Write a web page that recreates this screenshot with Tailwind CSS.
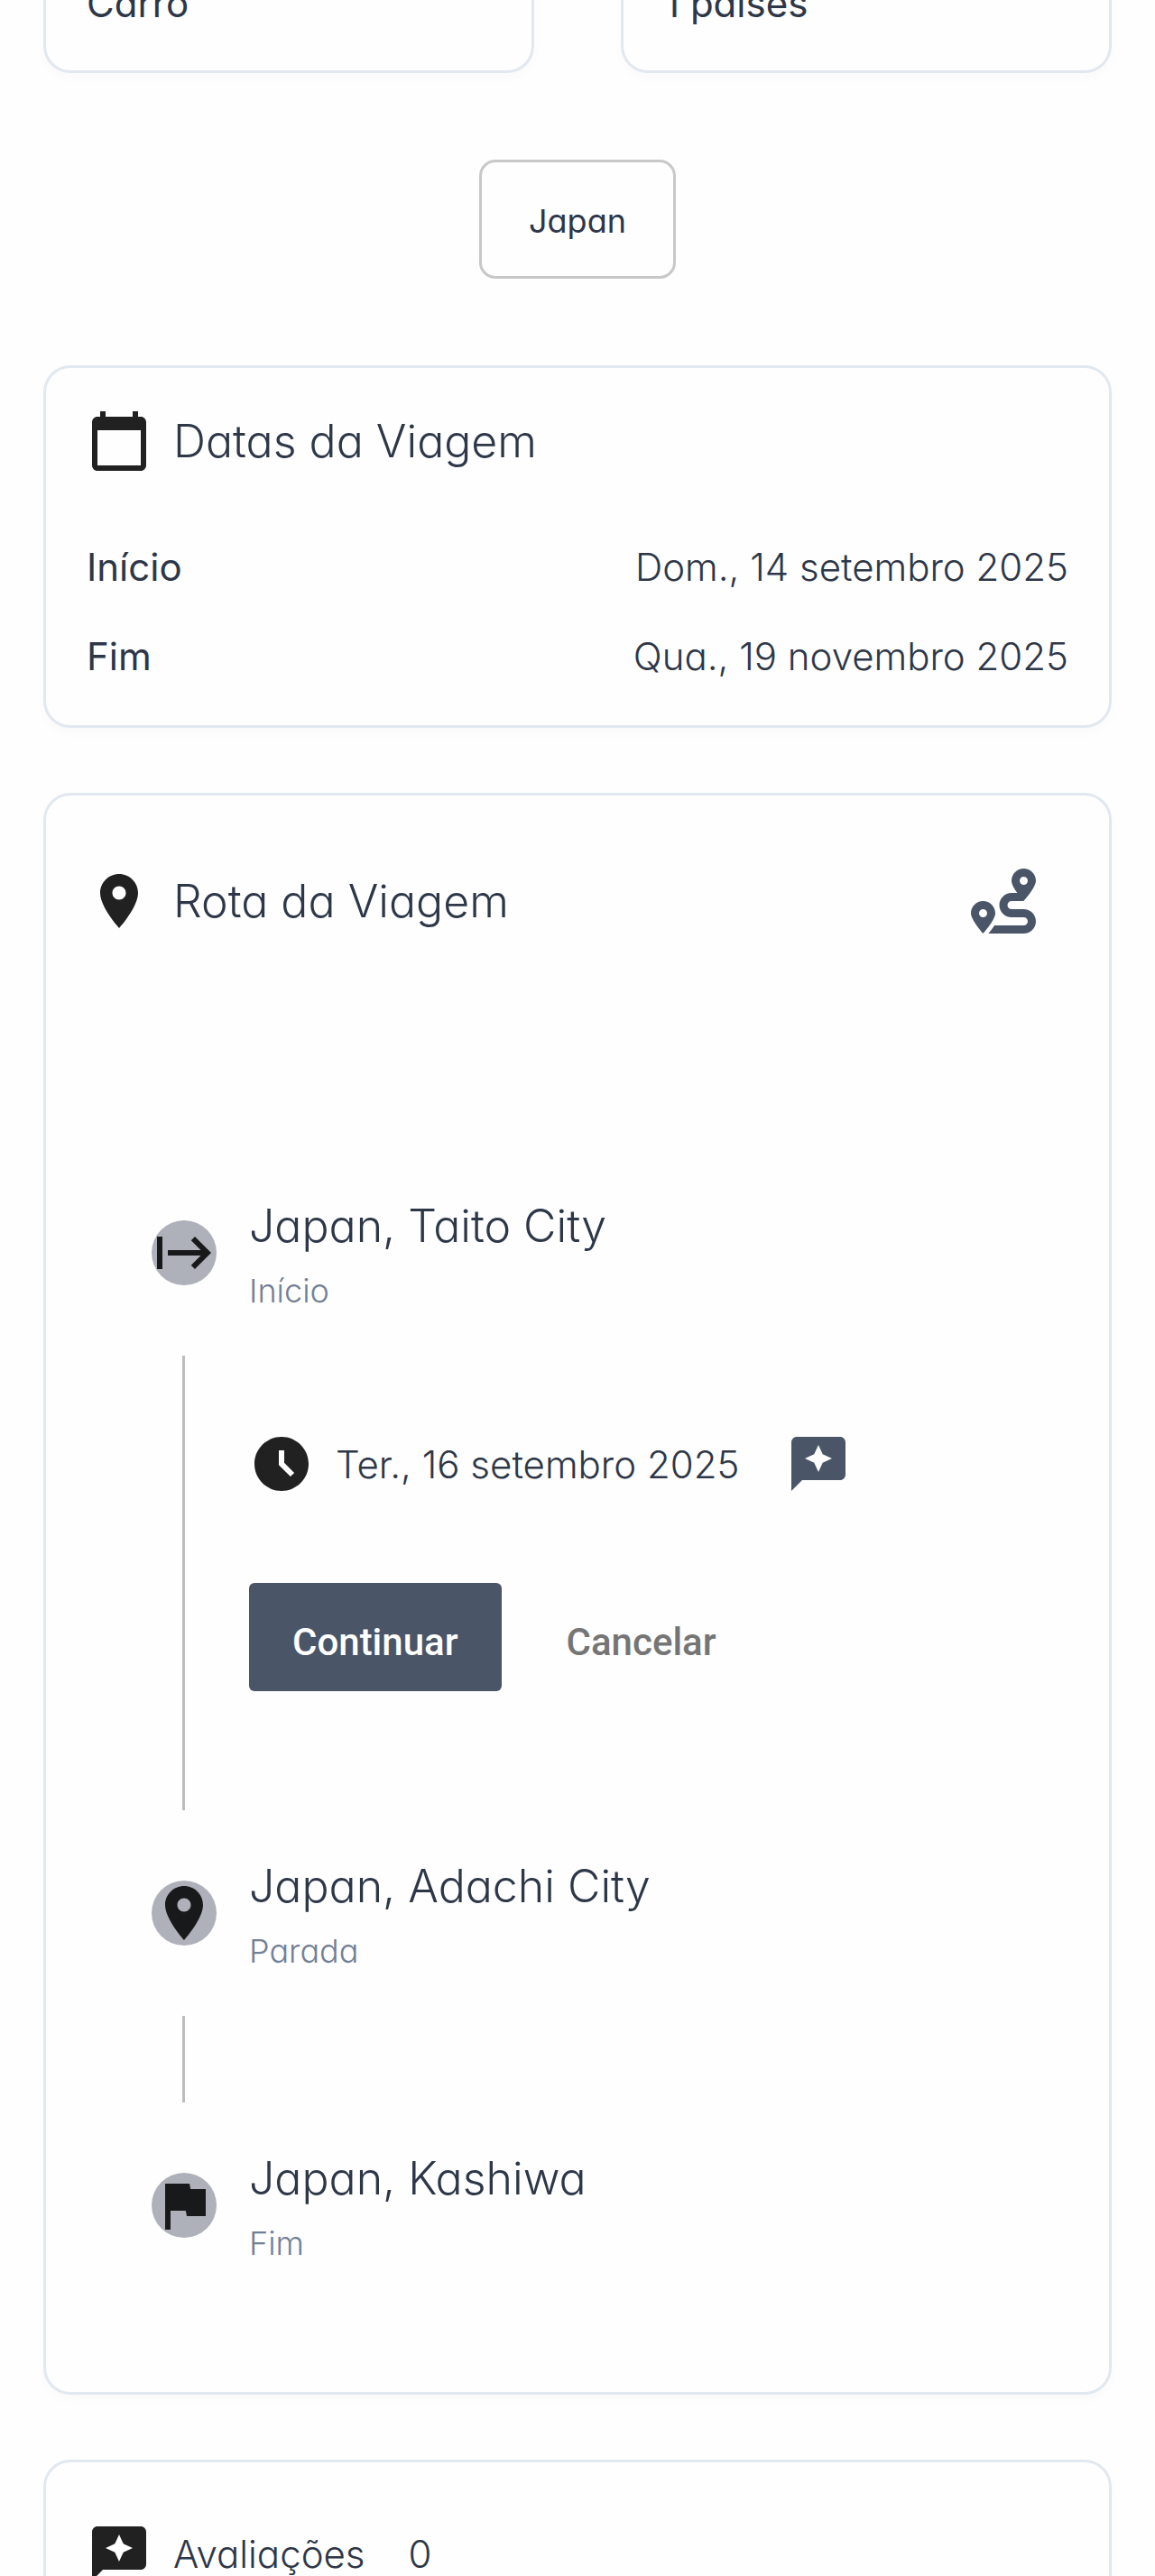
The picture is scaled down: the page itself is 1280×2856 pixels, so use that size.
<!DOCTYPE html>
<html lang="pt-BR">
<head>
<meta charset="utf-8">
<meta name="viewport" content="width=device-width, initial-scale=1">
<title>Viagem</title>
<script src="https://cdn.jsdelivr.net/npm/@tailwindcss/browser@4"></script>
</head>
<body class="h-screen overflow-hidden bg-[#fefefe] font-['Inter',sans-serif] text-[42px] leading-[63px] font-light text-[#2d3748] [font-feature-settings:'cv11']">
<main class="px-12">
  <section class="-mt-7 grid grid-cols-2 gap-24">
    <div class="rounded-b-[30px] border-3 border-t-0 border-[#e2e8f0] px-[45px] pb-[43px] font-normal shadow-[0_6px_12px_rgba(0,0,0,0.02)]">Carro</div>
    <div class="rounded-b-[30px] border-3 border-t-0 border-[#e2e8f0] px-[45px] pb-[43px] font-normal shadow-[0_6px_12px_rgba(0,0,0,0.02)]">1 países</div>
  </section>

  <div class="my-24 flex justify-center">
    <span class="rounded-[18px] border-3 border-[#c8c8c8] px-13 pt-[38px] pb-[34px] text-[36px] leading-[54px] font-normal">Japan</span>
  </div>

  <section class="rounded-[30px] border-3 border-[#e2e8f0] p-[45px] shadow-[0_6px_12px_rgba(0,0,0,0.02)]">
    <header class="mb-18 flex items-center gap-6">
      <svg class="size-18 shrink-0 fill-[#212121]" viewBox="0 0 24 24" aria-hidden="true"><path d="M20 3h-1V1h-2v2H7V1H5v2H4c-1.1 0-2 .9-2 2v16c0 1.1.9 2 2 2h16c1.1 0 2-.9 2-2V5c0-1.1-.9-2-2-2zm0 18H4V8h16v13z"/></svg>
      <h2 class="text-[50px] leading-[72px]">Datas da Viagem</h2>
    </header>
    <dl class="flex flex-col gap-9">
      <div class="flex justify-between"><dt class="font-normal">Início</dt><dd>Dom., 14 setembro 2025</dd></div>
      <div class="flex justify-between"><dt class="font-normal">Fim</dt><dd>Qua., 19 novembro 2025</dd></div>
    </dl>
  </section>

  <section class="mt-18 rounded-[30px] border-3 border-[#e2e8f0] p-[45px] shadow-[0_6px_12px_rgba(0,0,0,0.02)]">
    <header class="mb-39 flex items-center gap-6">
      <svg class="size-18 shrink-0 fill-[#212121]" viewBox="0 0 24 24" aria-hidden="true"><path d="M12 2C8.13 2 5 5.13 5 9c0 5.25 7 13 7 13s7-7.75 7-13c0-3.87-3.13-7-7-7zm0 9.5c-1.38 0-2.5-1.12-2.5-2.5s1.12-2.5 2.5-2.5 2.5 1.12 2.5 2.5-1.12 2.5-2.5 2.5z"/></svg>
      <h2 class="text-[50px] leading-[72px]">Rota da Viagem</h2>
      <button type="button" class="ml-auto p-9" aria-label="Ver rota">
        <svg class="size-18 fill-[#4a5568]" viewBox="0 0 512 512" aria-hidden="true"><path d="M416 320h-96c-17.6 0-32-14.4-32-32s14.4-32 32-32h96s96-107 96-160-43-96-96-96-96 43-96 96c0 25.5 22.2 63.4 45.3 96H320c-52.9 0-96 43.1-96 96s43.1 96 96 96h96c17.6 0 32 14.4 32 32s-14.4 32-32 32H185.5c-16 24.8-33.8 47.7-47.3 64H416c52.9 0 96-43.1 96-96s-43.1-96-96-96zm0-256c17.7 0 32 14.3 32 32s-14.3 32-32 32-32-14.3-32-32 14.3-32 32-32zM96 256c-53 0-96 43-96 96s96 160 96 160 96-107 96-160-43-96-96-96zm0 128c-17.7 0-32-14.3-32-32s14.3-32 32-32 32 14.3 32 32-14.3 32-32 32z"/></svg>
      </button>
    </header>

    <ol class="flex flex-col gap-12 px-18 py-24">
      <li class="flex flex-col gap-12">
        <div class="flex items-center gap-9">
          <span class="size-18 shrink-0 rounded-full bg-[#afb1ba]">
            <svg class="size-18 fill-[#17191a]" viewBox="0 0 24 24" aria-hidden="true"><path d="M14.59 7.41 18.17 11H6v2h12.17l-3.59 3.59L16 18l6-6-6-6-1.41 1.41zM2 6v12h2V6H2z"/></svg>
          </span>
          <div class="flex flex-col gap-3">
            <h3 class="text-[50px] leading-[72px]">Japan, Taito City</h3>
            <p class="text-[36px] leading-[48px] text-[#718096]">Início</p>
          </div>
        </div>
        <div class="ml-[34px] border-l-3 border-[#bdbdbd] pt-21 pb-33 pl-[71px]">
          <div class="flex items-center gap-6">
            <svg class="size-18 shrink-0 fill-[#212121]" viewBox="0 0 24 24" aria-hidden="true"><path d="M12 2C6.500 2 2 6.500 2 12s4.500 10 10 10 10-4.500 10-10S17.500 2 12 2zm3.300 14.700L11 12.400V7h2v4.600l3.700 3.700z"/></svg>
            <time datetime="2025-09-16">Ter., 16 setembro 2025</time>
            <button type="button" class="px-7" aria-label="Avaliar">
              <svg class="size-18 fill-[#4a5568]" viewBox="0 0 24 24" aria-hidden="true"><path d="M20 2H4c-1.100 0-1.990.9-1.990 2L2 22l4-4h14c1.100 0 2-.9 2-2V4c0-1.100-.9-2-2-2zm-6.430 9.570L12 15l-1.570-3.430L7 10l3.430-1.570L12 5l1.570 3.430L17 10l-3.430 1.570z"/></svg>
            </button>
          </div>
          <div class="mt-24 flex gap-6 font-['Roboto',sans-serif] font-medium">
            <button type="button" class="rounded-[6px] bg-[#4a5568] px-12 pt-[34px] pb-[23px] text-white">Continuar</button>
            <button type="button" class="px-12 pt-[34px] pb-[23px] text-[#757575]">Cancelar</button>
          </div>
        </div>
      </li>
      <li class="flex flex-col gap-12">
        <div class="flex items-center gap-9">
          <span class="size-18 shrink-0 rounded-full bg-[#afb1ba]">
            <svg class="size-18 fill-[#17191a]" viewBox="0 0 24 24" aria-hidden="true"><path d="M12 2C8.13 2 5 5.13 5 9c0 5.25 7 13 7 13s7-7.75 7-13c0-3.87-3.13-7-7-7zm0 9.500c-1.380 0-2.500-1.120-2.500-2.500s1.120-2.500 2.500-2.500 2.500 1.120 2.500 2.500-1.120 2.500-2.500 2.500z"/></svg>
          </span>
          <div class="flex flex-col gap-3">
            <h3 class="text-[50px] leading-[72px]">Japan, Adachi City</h3>
            <p class="text-[36px] leading-[48px] text-[#718096]">Parada</p>
          </div>
        </div>
        <div class="ml-[34px] h-24 border-l-3 border-[#bdbdbd]"></div>
      </li>
      <li class="flex items-center gap-9">
        <span class="size-18 shrink-0 rounded-full bg-[#afb1ba]">
          <svg class="size-18 fill-[#17191a]" viewBox="0 0 24 24" aria-hidden="true"><path d="M14.400 6 14 4H5v17h2v-7h5.600l.4 2h7V6z"/></svg>
        </span>
        <div class="flex flex-col gap-3">
          <h3 class="text-[50px] leading-[72px]">Japan, Kashiwa</h3>
          <p class="text-[36px] leading-[48px] text-[#718096]">Fim</p>
        </div>
      </li>
    </ol>
  </section>

  <section class="mt-18 rounded-[30px] border-3 border-[#e2e8f0] px-[45px] py-[65px] shadow-[0_6px_12px_rgba(0,0,0,0.02)]">
    <header class="flex items-center gap-6">
      <svg class="size-18 shrink-0 fill-[#212121]" viewBox="0 0 24 24" aria-hidden="true"><path d="M20 2H4c-1.100 0-1.990.9-1.990 2L2 22l4-4h14c1.100 0 2-.9 2-2V4c0-1.100-.9-2-2-2zm-6.430 9.570L12 15l-1.570-3.430L7 10l3.430-1.570L12 5l1.570 3.430L17 10l-3.430 1.570z"/></svg>
      <h2 class="mr-6">Avaliações</h2>
      <span>0</span>
    </header>
  </section>
</main>
</body>
</html>
